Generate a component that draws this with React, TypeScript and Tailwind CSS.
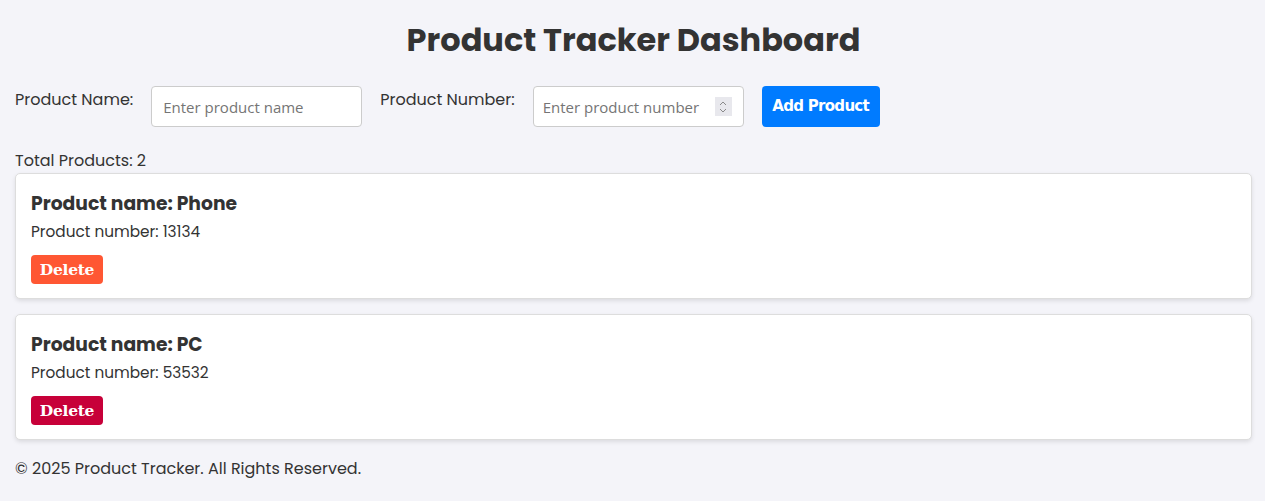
import { useState } from "react";

interface Product {
  name: string;
  number: string;
}

const sans = "font-['Poppins','Open_Sans',sans-serif]";

export default function App() {
  const [products, setProducts] = useState<Product[]>([
    { name: "Phone", number: "13134" },
    { name: "PC", number: "53532" },
  ]);
  const [name, setName] = useState("");
  const [num, setNum] = useState("");

  const add = () => {
    if (!name || !num) return;
    setProducts((p) => [...p, { name, number: num }]);
    setName("");
    setNum("");
  };

  return (
    <div className={`min-h-[501px] bg-[#f4f4f9] text-[#333] pl-[15px] pr-[13px] pt-[18px] ${sans}`}>
      {/* Header */}
      <h1 className="text-center text-[32px] font-bold leading-[44px] text-[#333]">
        Product Tracker Dashboard
      </h1>

      {/* Form */}
      <div className="mt-[24px] flex items-start">
        <label className="mt-[4px] text-[16px] leading-[20px]">Product Name:</label>
        <input
          value={name}
          onChange={(e) => setName(e.target.value)}
          placeholder="Enter product name"
          className="ml-[18px] h-[41px] w-[211px] rounded-[4px] border border-[#ccc] bg-white px-[11px] font-['Open_Sans',sans-serif] text-[15px] text-[#333] placeholder:text-[#757575] outline-none"
        />
        <label className="ml-[18px] mt-[4px] text-[16px] leading-[20px]">Product Number:</label>
        <div className="relative ml-[18px] h-[41px] w-[211px] rounded-[4px] border border-[#ccc] bg-white">
          <input
            value={num}
            onChange={(e) => setNum(e.target.value)}
            placeholder="Enter product number"
            className="h-full w-full bg-transparent pl-[9px] pr-[30px] font-['Open_Sans',sans-serif] text-[15px] text-[#333] placeholder:text-[#757575] outline-none"
          />
          <span className="absolute right-[11px] top-[10px] flex h-[19px] w-[17px] flex-col items-center justify-center bg-[#e8e8ed]">
            <svg width="8" height="14" viewBox="0 0 8 14" fill="none" stroke="#8a8a8a" strokeWidth="1">
              <path d="M1 5 L4 2 L7 5" />
              <path d="M1 9 L4 12 L7 9" />
            </svg>
          </span>
        </div>
        <button
          onClick={add}
          className="ml-[18px] h-[41px] w-[118px] rounded-[4px] bg-[#007bff] font-['DejaVu_Sans',sans-serif] text-[15px] font-bold tracking-[-0.7px] text-white"
        >
          Add Product
        </button>
      </div>

      {/* Count */}
      <p className="mt-[24px] text-[16px] leading-[20px]">Total Products: {products.length}</p>

      {/* List */}
      <div className="mt-[2px] flex flex-col gap-[15px]">
        {products.map((p, i) => (
          <div
            key={i}
            className="h-[126px] rounded-[5px] border border-[#ddd] bg-white px-[15px] pt-[17px] shadow-[0_2px_4px_rgba(0,0,0,0.1)]"
          >
            <h3 className="text-[18.72px] font-bold leading-[26px]">Product name: {p.name}</h3>
            <p className="mt-[4px] text-[15.3px] leading-[22px]">Product number: {p.number}</p>
            <button
              onClick={() => setProducts((ps) => ps.filter((_, j) => j !== i))}
              className={`mt-[12px] h-[29px] w-[72px] rounded-[4px] font-['DejaVu_Serif',serif] text-[15.5px] font-bold tracking-[-0.3px] text-white ${
                i % 2 === 0 ? "bg-[#ff5733]" : "bg-[#c70039]"
              }`}
            >
              Delete
            </button>
          </div>
        ))}
      </div>

      {/* Footer */}
      <footer className="mt-[19px] text-[16px] leading-[20px]">
        © 2025 Product Tracker. All Rights Reserved.
      </footer>
    </div>
  );
}
